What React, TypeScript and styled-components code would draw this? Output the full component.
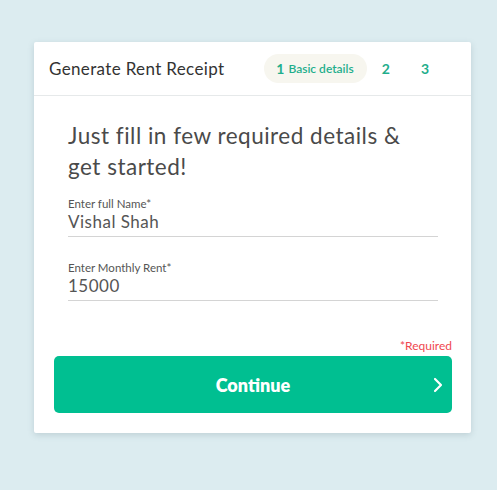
import React from "react";
import styled, { createGlobalStyle } from "styled-components";

const Global = createGlobalStyle`
  html, body { margin: 0; padding: 0; }
  body {
    background: #dcecf0;
    font-family: Lato, "Open Sans", Arial, sans-serif;
    -webkit-font-smoothing: antialiased;
  }
`;

const Page = styled.div`
  padding: 42px 0 0 34px;
  min-height: 490px;
  box-sizing: border-box;
`;

const Card = styled.div`
  width: 437px;
  background: #fff;
  border-radius: 2px;
  box-shadow: 0 2px 6px rgba(80, 110, 120, 0.22);
`;

const Header = styled.div`
  height: 53px;
  display: flex;
  align-items: center;
  padding: 0 15px;
  border-bottom: 1px solid #e6e9ea;
`;

const Title = styled.div`
  font-size: 17px;
  letter-spacing: 0.35px;
  color: #333;
  flex: 1;
`;

const Steps = styled.div`
  display: flex;
  align-items: center;
  margin-right: 27px;
`;

const Step = styled.div<{ $active?: boolean }>`
  display: flex;
  align-items: center;
  gap: 4px;
  color: #1fae8c;
  font-weight: 700;
  font-size: 14px;
  height: 29px;
  border-radius: 15px;
  ${(p) =>
    p.$active
      ? `background: #f7f6ef; padding: 0 13px 0 12px; margin-right: 15px;`
      : `padding: 0; margin-right: 31px; &:last-child { margin-right: 0; }`}
`;

const StepLabel = styled.span`
  font-size: 12px;
  font-weight: 600;
`;

const Body = styled.div`
  padding: 24px 19px 20px 20px;
`;

const Form = styled.div`
  padding: 0 14px;
`;

const Heading = styled.h2`
  margin: 0 0 15px;
  font-size: 22.5px;
  letter-spacing: 0.5px;
  line-height: 31px;
  font-weight: 400;
  color: #4a4a4a;
`;

const Field = styled.div`
  border-bottom: 1px solid #d4d4d4;
  padding-bottom: 3px;
  margin-bottom: 24px;
`;

const Label = styled.div`
  font-size: 11.5px;
  color: #555;
  line-height: 14px;
`;

const Value = styled.div`
  font-size: 17px;
  color: #555;
  line-height: 22px;
  letter-spacing: 0.5px;
`;

const Required = styled.div`
  text-align: right;
  font-size: 12px;
  line-height: 15px;
  color: #f0474f;
  margin-top: 37px;
  margin-bottom: 3px;
`;

const Button = styled.button`
  width: 100%;
  height: 57px;
  border: none;
  border-radius: 5px;
  background: #00bf91;
  color: #fff;
  font-family: inherit;
  font-weight: 800;
  font-size: 18px;
  position: relative;
  display: flex;
  align-items: center;
  justify-content: center;
  cursor: pointer;
`;

const Chevron = styled.svg`
  position: absolute;
  right: 9px;
  top: 50%;
  transform: translateY(-50%);
`;

export default function App() {
  return (
    <>
      <Global />
      <Page>
        <Card>
          <Header>
            <Title>Generate Rent Receipt</Title>
            <Steps>
              <Step $active>
                1 <StepLabel>Basic details</StepLabel>
              </Step>
              <Step>2</Step>
              <Step>3</Step>
            </Steps>
          </Header>
          <Body>
            <Form>
              <Heading>
                Just fill in few required details &amp;
                <br />
                get started!
              </Heading>
              <Field>
                <Label>Enter full Name*</Label>
                <Value>Vishal Shah</Value>
              </Field>
              <Field>
                <Label>Enter Monthly Rent*</Label>
                <Value>15000</Value>
              </Field>
            </Form>
            <Required>*Required</Required>
            <Button>
              Continue
              <Chevron width="10" height="15" viewBox="0 0 10 15">
                <path d="M2 1.5 L8 7.5 L2 13.5" fill="none" stroke="#fff" strokeWidth="2.2" strokeLinecap="round" strokeLinejoin="round" />
              </Chevron>
            </Button>
          </Body>
        </Card>
      </Page>
    </>
  );
}
